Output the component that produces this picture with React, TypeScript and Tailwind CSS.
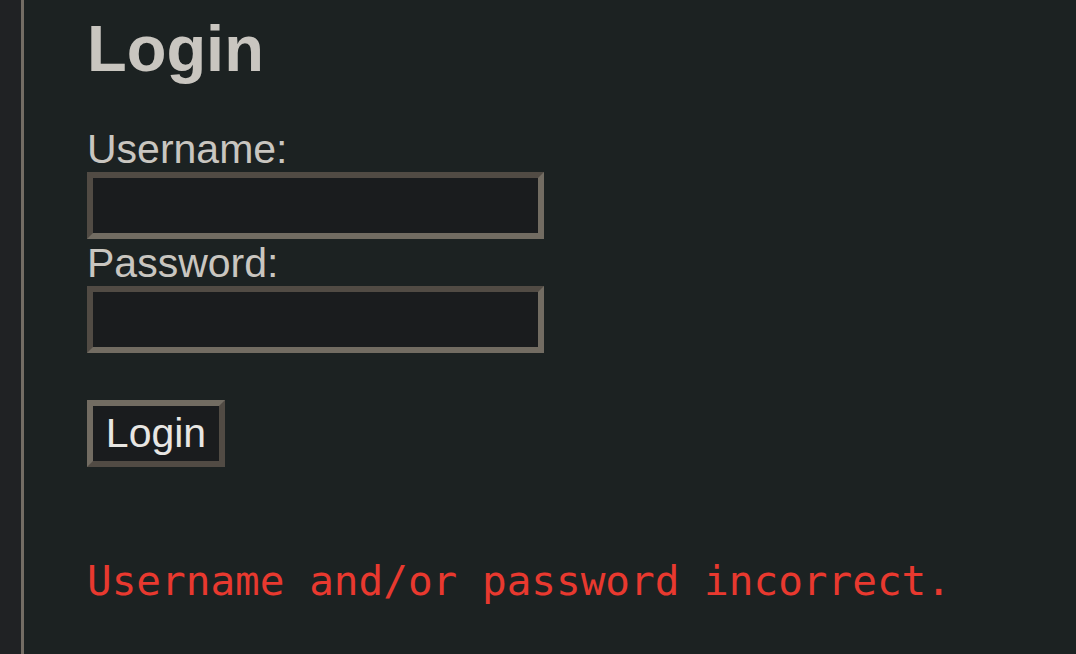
export default function App() {
    return (
        <div className="flex h-[654px] w-[1076px] overflow-hidden bg-[#202224] font-['Liberation_Sans',Arial,sans-serif]">
            <div className="w-[21px] shrink-0" />
            <main className="flex-1 border-l-[3px] border-[#736d64] bg-[#1c2222] pl-[63px]">
                <h1 className="mt-[17px] text-[65px] leading-[64px] font-bold text-[#c9c6c0]">Login</h1>
                <form className="mt-[45px] flex flex-col items-start" onSubmit={(e) => e.preventDefault()}>
                    <label htmlFor="username" className="text-[41px] leading-[46px] text-[#c9c6c0]">Username:</label>
                    <input
                        id="username"
                        type="text"
                        className="h-[67px] w-[457px] border-[6px] border-t-[#514b44] border-l-[#514b44] border-b-[#726c62] border-r-[#726c62] bg-[#1a1c1e] px-2 text-[32px] text-[#e8e6e3] outline-none"
                    />
                    <label htmlFor="password" className="mt-px text-[41px] leading-[46px] text-[#c9c6c0]">Password:</label>
                    <input
                        id="password"
                        type="password"
                        className="h-[67px] w-[457px] border-[6px] border-t-[#514b44] border-l-[#514b44] border-b-[#726c62] border-r-[#726c62] bg-[#1a1c1e] px-2 text-[32px] text-[#e8e6e3] outline-none"
                    />
                    <button
                        type="submit"
                        className="mt-[47px] flex h-[67px] w-[138px] items-center justify-center border-[6px] border-t-[#726c62] border-l-[#726c62] border-b-[#514b44] border-r-[#514b44] bg-[#1a1c1e] text-[41px] leading-none text-[#e8e6e3]"
                    >
                        Login
                    </button>
                </form>
                <p className="mt-[90px] font-['DejaVu_Sans_Mono',monospace] text-[41px] leading-[48px] text-[#e8392f]">
                    Username and/or password incorrect.
                </p>
            </main>
        </div>
    )
}
